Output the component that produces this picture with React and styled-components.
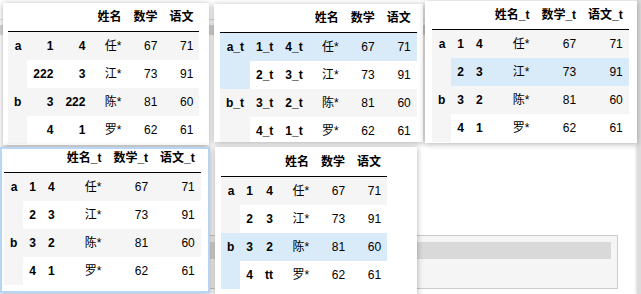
import React from 'react'
import styled, { createGlobalStyle } from 'styled-components';

const GlobalStyle = createGlobalStyle`
  html, body { margin: 0; padding: 0; background: #fff; }
  body { font-family: "Liberation Sans", "Noto Sans CJK SC", Arial, sans-serif; }
`

const Desk = styled.div`
  position: relative;
  width: 641px;
  height: 294px;
  overflow: hidden;
  display: flex;
  background: #fff;
`

const Page = styled.div`
  flex: 1;
  display: flex;
  flex-direction: column;
`

const TopRule = styled.div`
  margin-top: 19px;
  height: 1px;
  background: #e4e4e4;
`

const ToolBand = styled.div`
  margin-top: 5px;
  height: 10px;
  background: #d8d8d8;
`

const InputBox = styled.div`
  margin: auto 0 5px 150px;
  width: 460px;
  height: 46px;
  padding: 6px 6px 0 0;
  background: #f5f5f5;
  border: 1px solid #cccccc;
  box-sizing: content-box;
`

const InputBar = styled.div`
  height: 17px;
  background: #d9d9d9;
`

const ScrollStrip = styled.div`
  width: 4px;
  background: #dcdcdc;
  box-shadow: -1px 0 3px rgba(0,0,0,0.15);
`

// floating snapshot windows on the desk
const Window = styled.div`
  position: absolute;
  left: ${p => p.$x}px;
  top: ${p => p.$y}px;
  width: ${p => p.$w}px;
  height: ${p => p.$h}px;
  padding: ${p => p.$pt || 0}px 0 0 ${p => p.$pl}px;
  box-sizing: border-box;
  background: #fff;
  overflow: hidden;
  border: ${p => p.$focus ? '2px solid #b9d5f5' : 'none'};
  box-shadow: 0 1px 6px rgba(0,0,0,0.32);
`

const Table = styled.table`
  border-collapse: collapse;
  border-spacing: 0;
  font-size: 12px;
  line-height: 16px;
  color: #000;
  margin-top: ${p => p.$lift ? -p.$lift : 0}px;

  th, td {
    padding: 6px;
    text-align: right;
    white-space: nowrap;
  }
  thead th {
    font-weight: bold;
    border-bottom: 1px solid #000;
  }
  tbody th {
    font-weight: bold;
    vertical-align: top;
  }
`

const Row = styled.tr`
  background: ${p => p.$hover ? '#d9eaf9' : p.$odd ? '#f5f5f5' : '#fff'};
`

const Frame = ({ cols, rows, hover, lift }) => (
  <Table $lift={lift}>
    <thead>
      <tr>
        <th></th><th></th><th></th>
        {cols.map(c => <th key={c}>{c}</th>)}
      </tr>
    </thead>
    <tbody>
      {rows.map((r, i) => (
        <Row key={i} $odd={i % 2 === 0} $hover={hover === i}>
          {i % 2 === 0 && <th rowSpan={2}>{r[0]}</th>}
          <th>{r[1]}</th>
          <th>{r[2]}</th>
          {r.slice(3).map((v, j) => <td key={j}>{v}</td>)}
        </Row>
      ))}
    </tbody>
  </Table>
)

const plainCols = ['姓名', '数学', '语文']
const tCols = ['姓名_t', '数学_t', '语文_t']

const values = [['任*', 67, 71], ['江*', 73, 91], ['陈*', 81, 60], ['罗*', 62, 61]]

const withIndex = idx => idx.map((k, i) => [...k, ...values[i]])

const first = withIndex([['a', '1', '4'], ['', '222', '3'], ['b', '3', '222'], ['', '4', '1']])
const suffixed = withIndex([['a_t', '1_t', '4_t'], ['', '2_t', '3_t'], ['b_t', '3_t', '2_t'], ['', '4_t', '1_t']])
const simple = withIndex([['a', '1', '4'], ['', '2', '3'], ['b', '3', '2'], ['', '4', '1']])
const tail = withIndex([['a', '1', '4'], ['', '2', '3'], ['b', '3', '2'], ['', '4', 'tt']])

const App = () => {
  return (
    <Desk>
      <GlobalStyle />
      <Page>
        <TopRule />
        <ToolBand />
        <InputBox><InputBar /></InputBox>
      </Page>
      <ScrollStrip />

      <Window $x={3} $y={3} $w={206} $h={142} $pl={5}>
        <Frame cols={plainCols} rows={first} />
      </Window>
      <Window $x={214} $y={4} $w={209} $h={138} $pl={6}>
        <Frame cols={plainCols} rows={suffixed} hover={0} />
      </Window>
      <Window $x={425} $y={1} $w={212} $h={142} $pl={7}>
        <Frame cols={tCols} rows={simple} hover={1} />
      </Window>
      <Window $x={0} $y={147} $w={210} $h={146} $pl={2} $focus>
        <Frame cols={tCols} rows={simple} lift={5} />
      </Window>
      <Window $x={215} $y={147} $w={202} $h={160} $pl={6} $pt={1}>
        <Frame cols={plainCols} rows={tail} hover={2} />
      </Window>
    </Desk>
  )
};

export default App
